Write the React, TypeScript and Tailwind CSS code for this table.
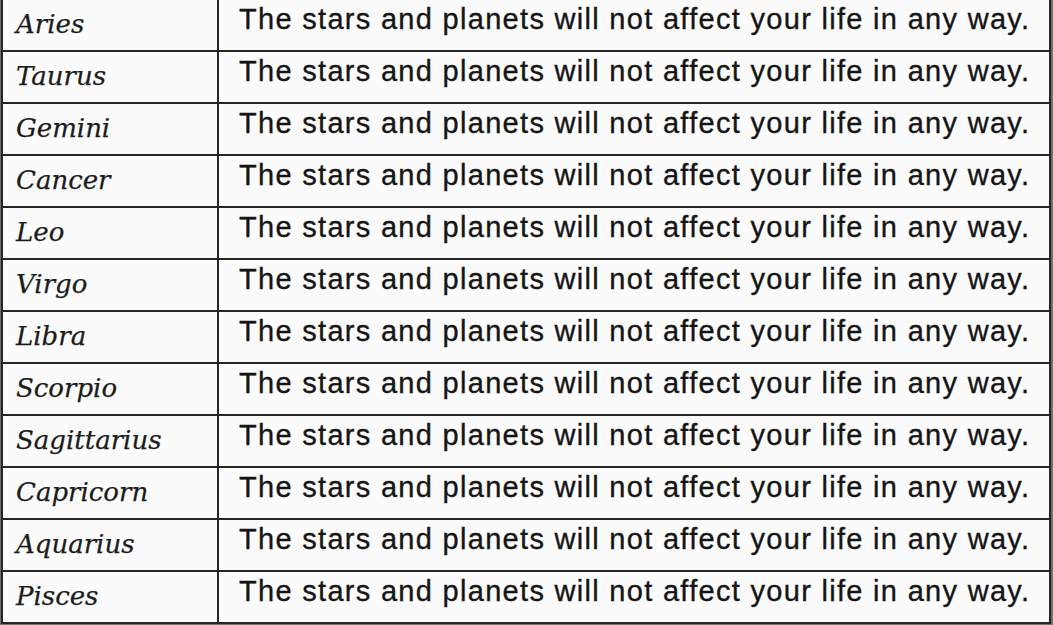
const signs = [
  "Aries",
  "Taurus",
  "Gemini",
  "Cancer",
  "Leo",
  "Virgo",
  "Libra",
  "Scorpio",
  "Sagittarius",
  "Capricorn",
  "Aquarius",
  "Pisces",
];

const line = "The stars and planets will not affect your life in any way.";

export default function App() {
  return (
    <div className="flex h-[625px] w-[1053px] flex-col overflow-hidden bg-[#6f6f6f]">
      <div className="-mt-[2px] ml-[1px] mr-[2px] border-x-2 border-b-2 border-[#262626] bg-[#fbfbfb]">
        {signs.map((sign) => (
          <div
            key={sign}
            className="grid h-[52px] grid-cols-[216px_1fr] border-t-2 border-[#262626]"
          >
            <div className="border-r-2 border-[#262626] pl-[13px] pt-[8px] font-['DejaVu_Serif',serif] text-[26px] italic leading-[32px] text-[#1c1c1c] [-webkit-text-stroke:0.25px_#1c1c1c]">
              {sign}
            </div>
            <div className="whitespace-nowrap pl-[20px] pt-[3px] font-['Liberation_Sans',Arial,sans-serif] text-[29px] leading-[32px] tracking-[1.3px] text-[#151515] [-webkit-text-stroke:0.35px_#151515]">
              {line}
            </div>
          </div>
        ))}
      </div>
      <div className="flex-1 bg-gradient-to-b from-[#8a8a8a] to-[#5e5e5e]" />
    </div>
  );
}
